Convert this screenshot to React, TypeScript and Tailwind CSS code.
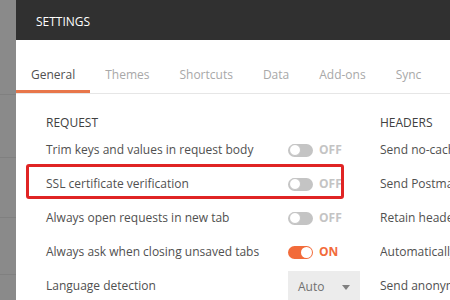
import React from "react";

const tabs = ["General", "Themes", "Shortcuts", "Data", "Add-ons", "Sync"];

function Toggle({ on }: { on?: boolean }) {
  return (
    <div className="flex items-center gap-[6px]">
      <div
        className={
          on
            ? "w-[25px] h-[13px] rounded-full bg-[#f26b3a] flex items-center justify-end px-[1px]"
            : "w-[25px] h-[13px] rounded-full bg-[#c4c4c4] flex items-center justify-start px-[1px]"
        }
      >
        <div
          className={
            on
              ? "w-[11px] h-[11px] rounded-full bg-white"
              : "w-[12px] h-[12px] rounded-full bg-white border border-[#c4c4c4]"
          }
        />
      </div>
      <span
        className={
          on
            ? "text-[12px] font-bold text-[#f26b3a]"
            : "text-[12px] font-bold text-[#c4c4c4]"
        }
      >
        {on ? "ON" : "OFF"}
      </span>
    </div>
  );
}

function Row({ label, children }: { label: string; children?: React.ReactNode }) {
  return (
    <div className="h-[34px] flex items-center justify-between">
      <span>{label}</span>
      <div className="w-[62px] flex">{children}</div>
    </div>
  );
}

export default function App() {
  return (
    <div
      className="w-[450px] h-[300px] overflow-hidden flex bg-[#8a8a8a] text-[12px] text-[#505050]"
      style={{ fontFamily: '"Open Sans", "Liberation Sans", sans-serif' }}
    >
      <div className="w-[16px] shrink-0 flex flex-col">
        <div className="h-[95px] border-b border-[#808080]" />
        <div className="h-[63px] border-b border-[#808080]" />
        <div className="h-[60px] border-b border-[#808080]" />
        <div className="h-[57px] border-b border-[#808080]" />
      </div>
      <div className="flex-1 min-w-0 overflow-hidden bg-white flex flex-col relative">
        <div className="h-[40px] shrink-0 bg-[#303030] flex items-center px-[20px] pt-[3px] text-white text-[12px]">
          SETTINGS
        </div>
        <div className="h-[54px] shrink-0 flex items-end border-b border-[#e6e6e6]">
          {tabs.map((t, i) => (
            <div
              key={t}
              className={
                i === 0
                  ? "px-[15px] pb-[6px] border-b-[3px] border-[#e8764a] text-[#505050]"
                  : "px-[15px] pb-[6px] border-b-[3px] border-transparent text-[#a8a8a8]"
              }
            >
              {t}
            </div>
          ))}
        </div>
        <div className="flex pl-[30px] pt-[15px] gap-[30px]">
          <div className="w-[304px] shrink-0">
            <div className="h-[24px] pt-[4px] flex items-center text-[#404040]">REQUEST</div>
            <Row label="Trim keys and values in request body">
              <Toggle />
            </Row>
            <Row label="SSL certificate verification">
              <Toggle />
            </Row>
            <Row label="Always open requests in new tab">
              <Toggle />
            </Row>
            <Row label="Always ask when closing unsaved tabs">
              <Toggle on />
            </Row>
            <div className="h-[34px] flex items-center justify-between">
              <span>Language detection</span>
              <div className="w-[72px] h-[32px] mr-[-10px] bg-[#ececec] flex items-center justify-between px-[10px] text-[#707070] translate-y-[1px]">
                <span>Auto</span>
                <svg width="8" height="5" viewBox="0 0 8 5">
                  <path d="M0 0h8L4 5z" fill="#808080" />
                </svg>
              </div>
            </div>
          </div>
          <div className="flex-1 whitespace-nowrap overflow-hidden">
            <div className="h-[24px] pt-[4px] flex items-center text-[#404040]">HEADERS</div>
            <div className="h-[34px] flex items-center">Send no-cache header</div>
            <div className="h-[34px] flex items-center">Send Postman Token header</div>
            <div className="h-[34px] flex items-center">Retain headers when clicking on links</div>
            <div className="h-[34px] flex items-center">Automatically follow redirects</div>
            <div className="h-[34px] flex items-center">Send anonymous usage data</div>
          </div>
        </div>
        <div className="absolute left-[10px] top-[164px] w-[318px] h-[35px] border-[3px] border-[#e02424] rounded-[3px]" />
      </div>
    </div>
  );
}
